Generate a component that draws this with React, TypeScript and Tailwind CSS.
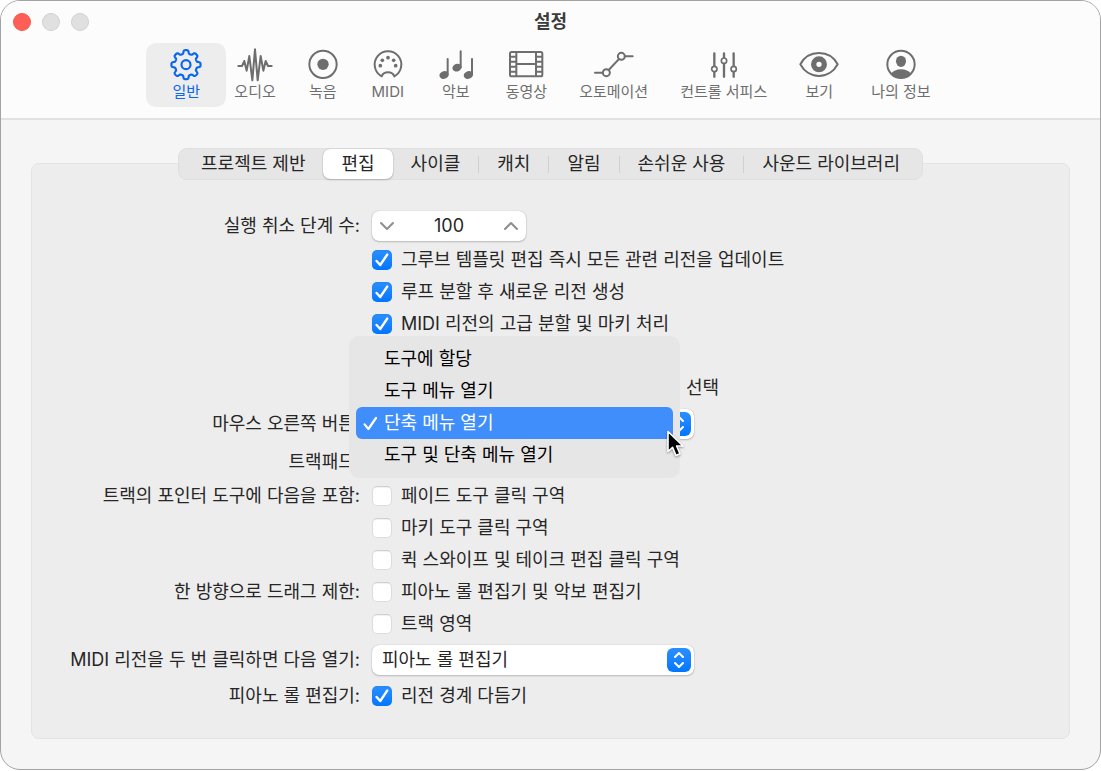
import { useState, ReactNode } from "react"

type ToolbarItem = {
  id: string
  label: string
  icon: ReactNode
}

type CheckRowProps = {
  label: string
  defaultChecked?: boolean
}

type RowLabelProps = {
  htmlFor?: string
  id?: string
  children: ReactNode
}

// eight rounded teeth around a circle
const gearPath = () => {
  const points: string[] = []
  for (let i = 0; i < 240; i++) {
    const angle = (i / 240) * Math.PI * 2
    const radius = 38.5 + 5.2 * Math.tanh(2.4 * Math.cos(8 * angle) + 0.1)
    points.push(`${(48 + radius * Math.sin(angle)).toFixed(2)} ${(50 - radius * Math.cos(angle)).toFixed(2)}`)
  }
  return `M${points.join('L')}Z`
}

const toolbarItems: ToolbarItem[] = [
  {
    id: 'general',
    label: '일반',
    icon: (
      <svg width="32" height="34" viewBox="0 0 96 102" fill="none" stroke="currentColor" strokeWidth="6.5" strokeLinejoin="round">
        <path d={gearPath()} />
        <circle cx="48" cy="50" r="13.5" />
      </svg>
    )
  },
  {
    id: 'audio',
    label: '오디오',
    icon: (
      <svg width="36" height="34" viewBox="0 0 108 102" fill="none" stroke="currentColor" strokeWidth="6" strokeLinecap="round" strokeLinejoin="round">
        <path d="M4 54H15L22 39L29 68L37 24L46 97L54 4L62 97L71 24L79 68L86 39L93 54H104" />
      </svg>
    )
  },
  {
    id: 'recording',
    label: '녹음',
    icon: (
      <svg width="30" height="34" viewBox="0 0 90 102" fill="none" stroke="currentColor" strokeWidth="6">
        <circle cx="45" cy="49" r="41" />
        <circle cx="45" cy="49" r="17" fill="currentColor" stroke="none" />
      </svg>
    )
  },
  {
    id: 'midi',
    label: 'MIDI',
    icon: (
      <svg width="36" height="34" viewBox="-9 0 108 102" fill="none" stroke="currentColor" strokeWidth="6" strokeLinejoin="round">
        <path d="M26 85A40 40 0 1 1 64 85C61 77 54 73 45 73C36 73 29 77 26 85Z" />
        <g fill="currentColor" stroke="none">
          <circle cx="22" cy="53" r="5.5" />
          <circle cx="28" cy="37" r="5.5" />
          <circle cx="45" cy="29" r="5.5" />
          <circle cx="62" cy="37" r="5.5" />
          <circle cx="68" cy="53" r="5.5" />
        </g>
      </svg>
    )
  },
  {
    id: 'score',
    label: '악보',
    icon: (
      <svg width="36" height="34" viewBox="-3 0 108 102" fill="currentColor" stroke="currentColor" strokeWidth="6" strokeLinecap="round">
        <path d="M26 33V80M65 10V58M99 33V80" fill="none" />
        <g stroke="none">
          <ellipse cx="15" cy="81" rx="14" ry="11.5" transform="rotate(-20 15 81)" />
          <ellipse cx="54" cy="59" rx="14" ry="11.5" transform="rotate(-20 54 59)" />
          <ellipse cx="88" cy="81" rx="14" ry="11.5" transform="rotate(-20 88 81)" />
        </g>
      </svg>
    )
  },
  {
    id: 'movie',
    label: '동영상',
    icon: (
      <svg width="36" height="34" viewBox="0 0 108 102" fill="none" stroke="currentColor" strokeWidth="6">
        <rect x="6" y="12" width="97" height="73" rx="5" />
        <path d="M25 12V85M84 12V85M25 48H84M6 26H25M6 41H25M6 56H25M6 71H25M84 26H103M84 41H103M84 56H103M84 71H103" />
      </svg>
    )
  },
  {
    id: 'automation',
    label: '오토메이션',
    icon: (
      <svg width="40" height="34" viewBox="0 0 120 102" fill="none" stroke="currentColor" strokeWidth="6" strokeLinecap="round">
        <path d="M3 74H26M44 66L74 34M92 25H116" />
        <circle cx="37" cy="74" r="10.5" />
        <circle cx="82" cy="25" r="10.5" />
      </svg>
    )
  },
  {
    id: 'surfaces',
    label: '컨트롤 서피스',
    icon: (
      <svg width="30" height="34" viewBox="0 0 90 102" fill="none" stroke="currentColor" strokeWidth="7" strokeLinecap="round">
        <path d="M16 16V53M16 73V86M45 16V28M45 48V86M74 16V53M74 73V86" />
        <circle cx="16" cy="63" r="8" strokeWidth="5" />
        <circle cx="45" cy="38" r="8" strokeWidth="5" />
        <circle cx="74" cy="63" r="8" strokeWidth="5" />
      </svg>
    )
  },
  {
    id: 'view',
    label: '보기',
    icon: (
      <svg width="40" height="34" viewBox="0 0 120 102" fill="none" stroke="currentColor" strokeWidth="6" strokeLinejoin="round">
        <path d="M4 49C14 30 34 15 60 15S106 30 116 49C106 68 86 84 60 84S14 68 4 49Z" />
        <circle cx="60" cy="49" r="16" strokeWidth="16" />
      </svg>
    )
  },
  {
    id: 'profile',
    label: '나의 정보',
    icon: (
      <svg width="30" height="34" viewBox="0 0 90 102" fill="currentColor">
        <circle cx="45" cy="49" r="41" fill="none" stroke="currentColor" strokeWidth="6" />
        <ellipse cx="45" cy="40" rx="15" ry="17" />
        <path d="M15 77C21 69 32 64 45 64S69 69 75 77C68 86 57 91 45 91S22 86 15 77Z" />
      </svg>
    )
  },
]

const tabs = ['프로젝트 제반', '편집', '사이클', '캐치', '알림', '손쉬운 사용', '사운드 라이브러리']

const menuOptions = ['도구에 할당', '도구 메뉴 열기', '단축 메뉴 열기', '도구 및 단축 메뉴 열기']

function PopupArrows() {
  return (
    <span className="pointer-events-none absolute right-[3px] top-[3px] flex size-6 items-center justify-center rounded-md bg-linear-to-b from-[#2a8fff] to-[#0076ff] text-white">
      <svg width="12" height="18" viewBox="0 0 12 18" fill="none" stroke="currentColor" strokeWidth="2" strokeLinecap="round" strokeLinejoin="round">
        <path d="M2 6L6 2L10 6M2 12L6 16L10 12" />
      </svg>
    </span>
  )
}

function RowLabel({ htmlFor, id, children }: RowLabelProps) {
  const className = "col-start-1 text-right whitespace-nowrap"

  return htmlFor
    ? <label htmlFor={htmlFor} className={className}>{children}</label>
    : <span id={id} className={className}>{children}</span>
}

function CheckRow({ label, defaultChecked = false }: CheckRowProps) {
  return (
    <label className="flex h-8 items-center gap-[9px] whitespace-nowrap">
      <span className="grid size-5 place-items-center">
        <input
          type="checkbox"
          defaultChecked={defaultChecked}
          className="peer col-start-1 row-start-1 size-5 appearance-none rounded-[5px] border border-[#dcdcdc] border-t-[#cfcfcf] bg-white shadow-[inset_0_1px_1px_rgba(0,0,0,0.06)] checked:border-0 checked:bg-linear-to-b checked:from-[#2a8fff] checked:to-[#0076ff]"
        />
        <svg
          width="14" height="14" viewBox="0 0 14 14"
          className="pointer-events-none invisible col-start-1 row-start-1 text-white peer-checked:visible"
          fill="none" stroke="currentColor" strokeWidth="2.4" strokeLinecap="round" strokeLinejoin="round"
        >
          <path d="M1.6 8L5.2 12L12.2 1.6" />
        </svg>
      </span>
      {label}
    </label>
  )
}

function ShortcutPopup() {
  const [selected, setSelected] = useState(2)

  return (
    <div className="relative w-[322px]">
      <button
        type="button"
        aria-haspopup="listbox"
        aria-expanded="true"
        aria-labelledby="right-button"
        className="relative block h-[30px] w-full rounded-[7px] bg-white shadow-[0_0_1px_rgba(0,0,0,0.3),0_1px_2px_rgba(0,0,0,0.2)]"
      >
        <PopupArrows />
      </button>

      <ul
        role="listbox"
        aria-labelledby="right-button"
        className="absolute -left-[23px] -top-[73px] z-10 w-[331px] rounded-[10px] bg-[#e6e6e6] p-[7px] text-black"
      >
        {menuOptions.map((option, index) => (
          <li
            key={option}
            role="option"
            aria-selected={index === selected}
            onClick={() => setSelected(index)}
            className="flex h-8 items-center rounded-md pl-[7px] aria-selected:bg-[#3f8efc] aria-selected:text-white"
          >
            <span className="w-[21px]">
              {index === selected && (
                <svg width="15" height="15" viewBox="0 0 15 15" fill="none" stroke="currentColor" strokeWidth="2.2" strokeLinecap="round" strokeLinejoin="round">
                  <path d="M1.6 8.4L5.4 13L13 2" />
                </svg>
              )}
            </span>
            {option}
          </li>
        ))}
      </ul>

      <svg
        width="20" height="28" viewBox="0 0 20 28"
        className="pointer-events-none absolute right-2 top-[21px] z-20 drop-shadow-[0_1px_1px_rgba(0,0,0,0.4)]"
      >
        <path d="M2 1.5V21.5L6.6 17.4L10 25.5L14 23.8L10.6 16H17Z" fill="#000" stroke="#fff" strokeWidth="1.6" strokeLinejoin="round" />
      </svg>
    </div>
  )
}

export default function App() {
  const [section, setSection] = useState('general')
  const [tab, setTab] = useState('편집')
  const [undoSteps, setUndoSteps] = useState(100)

  return (
    <main className="overflow-hidden rounded-[20px] border border-[#a3a3a3] bg-[#f5f5f5] font-['Inter','Noto_Sans_CJK_KR',sans-serif] text-lg/6 text-[#262626]">
      <header className="border-b-2 border-[#e2e2e2] bg-[#fcfcfc] pb-[11px]">
        <div className="grid h-[42px] grid-cols-[1fr_auto_1fr] items-center px-3">
          <div className="flex gap-[11px]">
            <button type="button" aria-label="닫기" className="size-[18px] rounded-full border border-[#ee5a52] bg-[#ff5f57]" />
            <button type="button" aria-label="최소화" className="size-[18px] rounded-full border border-[#d0d0d0] bg-[#e0e0e0]" />
            <button type="button" aria-label="확대" className="size-[18px] rounded-full border border-[#d0d0d0] bg-[#e0e0e0]" />
          </div>
          <h1 className="font-bold text-[#3c3c3c]">설정</h1>
        </div>

        <nav className="flex justify-center pr-2">
          {toolbarItems.map(item => (
            <button
              key={item.id}
              type="button"
              aria-pressed={item.id === section}
              onClick={() => setSection(item.id)}
              className="flex h-16 flex-col items-center rounded-[10px] px-4 pt-[5px] text-[15px]/5 whitespace-nowrap text-[#6e6e6e] aria-pressed:-mr-2 aria-pressed:bg-[#ededed] aria-pressed:px-6 aria-pressed:text-[#0a66ee]"
            >
              {item.icon}
              {item.label}
            </button>
          ))}
        </nav>
      </header>

      <div className="px-[30px] pt-7 pb-[30px]">
        <div role="tablist" className="relative mx-auto flex h-8 w-fit items-center rounded-[9px] border border-[#dfdfdf] bg-[#e6e6e6] px-1">
          {tabs.map((name, index) => (
            <div key={name} className="flex items-center">
              {index > 2 && <span className="h-[17px] w-px bg-[#d0d0d0]" />}
              <button
                type="button"
                role="tab"
                aria-selected={name === tab}
                onClick={() => setTab(name)}
                className="h-[30px] rounded-[7px] px-[18px] whitespace-nowrap aria-selected:bg-white aria-selected:shadow-[0_0_1px_rgba(0,0,0,0.3),0_1px_2px_rgba(0,0,0,0.2)]"
              >
                {name}
              </button>
            </div>
          ))}
        </div>

        <section className="-mt-[17px] rounded-lg border border-[#e3e3e3] bg-[#ededed] pt-11 pb-[26px]">
          <div className="grid grid-cols-[328px_1fr] items-center gap-x-3">
            <RowLabel htmlFor="undo-steps">실행 취소 단계 수:</RowLabel>
            <div className="flex h-9 items-center">
              <div className="flex h-[30px] w-[154px] items-center justify-between rounded-[7px] bg-white px-[7px] shadow-[0_0_1px_rgba(0,0,0,0.3),0_1px_2px_rgba(0,0,0,0.2)]">
                <button type="button" aria-label="감소" onClick={() => setUndoSteps(undoSteps - 1)} className="text-[#8e8e8e]">
                  <svg width="16" height="10" viewBox="0 0 16 10" fill="none" stroke="currentColor" strokeWidth="2" strokeLinecap="round" strokeLinejoin="round">
                    <path d="M2 2L8 8L14 2" />
                  </svg>
                </button>
                <input
                  id="undo-steps"
                  type="text"
                  value={undoSteps}
                  onChange={e => setUndoSteps(+e.target.value)}
                  className="w-20 bg-transparent text-center"
                />
                <button type="button" aria-label="증가" onClick={() => setUndoSteps(undoSteps + 1)} className="text-[#8e8e8e]">
                  <svg width="16" height="10" viewBox="0 0 16 10" fill="none" stroke="currentColor" strokeWidth="2" strokeLinecap="round" strokeLinejoin="round">
                    <path d="M2 8L8 2L14 8" />
                  </svg>
                </button>
              </div>
            </div>

            <div className="col-start-2">
              <CheckRow label="그루브 템플릿 편집 즉시 모든 관련 리전을 업데이트" defaultChecked />
              <CheckRow label="루프 분할 후 새로운 리전 생성" defaultChecked />
              <CheckRow label="MIDI 리전의 고급 분할 및 마키 처리" defaultChecked />
              <p className="flex h-16 w-[347px] items-end justify-end pb-1">선택</p>
            </div>

            <RowLabel id="right-button">마우스 오른쪽 버튼:</RowLabel>
            <div className="flex h-10 items-center">
              <ShortcutPopup />
            </div>

            <div className="col-start-1 flex h-9 items-center justify-end">트랙패드:</div>

            <RowLabel>트랙의 포인터 도구에 다음을 포함:</RowLabel>
            <CheckRow label="페이드 도구 클릭 구역" />
            <div className="col-start-2">
              <CheckRow label="마키 도구 클릭 구역" />
              <CheckRow label="퀵 스와이프 및 테이크 편집 클릭 구역" />
            </div>

            <RowLabel>한 방향으로 드래그 제한:</RowLabel>
            <CheckRow label="피아노 롤 편집기 및 악보 편집기" />
            <div className="col-start-2">
              <CheckRow label="트랙 영역" />
            </div>

            <RowLabel htmlFor="double-click">MIDI 리전을 두 번 클릭하면 다음 열기:</RowLabel>
            <div className="flex h-10 items-center">
              <div className="relative w-[322px]">
                <select
                  id="double-click"
                  className="block h-[30px] w-full appearance-none rounded-[7px] bg-white pl-[10px] shadow-[0_0_1px_rgba(0,0,0,0.3),0_1px_2px_rgba(0,0,0,0.2)]"
                >
                  <option>피아노 롤 편집기</option>
                </select>
                <PopupArrows />
              </div>
            </div>

            <RowLabel>피아노 롤 편집기:</RowLabel>
            <CheckRow label="리전 경계 다듬기" defaultChecked />
          </div>
        </section>
      </div>
    </main>
  )
}
